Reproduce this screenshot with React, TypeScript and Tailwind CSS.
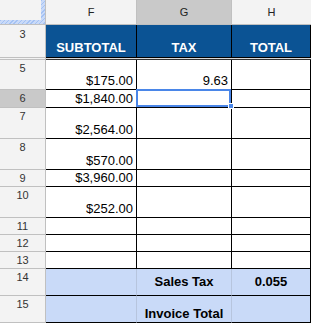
import React from 'react'

const cols = 'grid grid-cols-[46px_91px_95px_79px]'
const hatch = 'bg-[repeating-linear-gradient(135deg,#a4c2f4_0px,#a4c2f4_1px,#c9daf8_1px,#c9daf8_3px)]'

type RowDef = { n: string, h: string, f?: string, g?: string, sel?: boolean }

const rows: RowDef[] = [
  { n: '5', h: 'h-[30px]', f: '$175.00', g: '9.63' },
  { n: '6', h: 'h-[18px]', f: '$1,840.00', sel: true },
  { n: '7', h: 'h-[31px]', f: '$2,564.00' },
  { n: '8', h: 'h-[31px]', f: '$570.00' },
  { n: '9', h: 'h-[17px]', f: '$3,960.00' },
  { n: '10', h: 'h-[31px]', f: '$252.00' },
  { n: '11', h: 'h-[17px]' },
  { n: '12', h: 'h-[17px]' },
  { n: '13', h: 'h-[17px]' },
]

function RowHead({ n, sel = false }: { n: string, sel?: boolean }) {
  return (
    <div className={`border-r border-b border-[#c0c0c0] ${sel ? 'bg-[#c9c9c9]' : 'bg-[#f3f3f3]'} text-[11px] leading-[14px] text-[#333] text-center pt-[1px]`}>
      {n}
    </div>
  )
}

function DataCell({ v }: { v?: string }) {
  return (
    <div className="border-r border-b border-black flex items-end justify-end px-[3px] pb-[1px] text-[13px] leading-[15px] text-black">
      {v}
    </div>
  )
}

export default function App() {
  return (
    <div className="w-[311px] h-[323px] overflow-hidden bg-white font-['Liberation_Sans',Arial,sans-serif]">
      {/* column letters */}
      <div className={`${cols} h-[25px]`}>
        <div className="border-r border-b border-[#c0c0c0] bg-[#f3f3f3] flex flex-col">
          <div className="flex flex-1">
            <div className="flex-1" />
            <div className={`w-[4px] ${hatch}`} />
          </div>
          <div className={`h-[4px] ${hatch}`} />
        </div>
        <div className="border-r border-b border-[#c0c0c0] bg-[#f3f3f3] flex items-center justify-center text-[11px] text-[#222]">F</div>
        <div className="border-r border-b border-[#c0c0c0] bg-[#c9c9c9] flex items-center justify-center text-[11px] text-[#222]">G</div>
        <div className="border-b border-[#c0c0c0] bg-[#f3f3f3] flex items-center justify-center text-[11px] text-[#222]">H</div>
      </div>

      {/* row 3 header */}
      <div className={`${cols} h-[32px]`}>
        <div className="border-r border-[#c0c0c0] bg-[#f3f3f3] text-[11px] leading-[14px] text-[#333] text-center pt-[2px]">3</div>
        {['SUBTOTAL', 'TAX', 'TOTAL'].map(t => (
          <div key={t} className="border-r border-black bg-[#0b5394] flex items-end justify-center pb-[2px] text-[13px] leading-[15px] font-bold text-white">
            {t}
          </div>
        ))}
      </div>

      {/* frozen divider */}
      <div className={`${cols} h-[3px]`}>
        <div className="border-r border-[#c0c0c0] flex flex-col">
          <div className="h-px bg-[#c0c0c0]" />
          <div className="h-px bg-[#f3f3f3]" />
          <div className="h-px bg-[#c0c0c0]" />
        </div>
        <div className="col-span-3 flex flex-col">
          <div className="h-px bg-black" />
          <div className="h-px bg-[#d9d9d9]" />
          <div className="h-px bg-[#333]" />
        </div>
      </div>

      {rows.map(r => (
        <div key={r.n} className={`${cols} ${r.h}`}>
          <RowHead n={r.n} sel={r.sel} />
          <DataCell v={r.f} />
          {r.sel ? (
            <div className="relative border-r border-b border-black">
              <div className="absolute -left-px -top-px w-[95px] h-[18px] border-2 border-[#4a86e8] z-10" />
              <div className="absolute -right-[3px] -bottom-[2px] w-[6px] h-[6px] bg-[#4a86e8] border border-white z-20" />
            </div>
          ) : (
            <DataCell v={r.g} />
          )}
          <DataCell />
        </div>
      ))}

      {/* row 14 */}
      <div className={`${cols} h-[27px]`}>
        <RowHead n="14" />
        <div className="border-r border-b border-[#b7c5de] border-b-black bg-[#c9daf8]" />
        <div className="border-r border-b border-[#b7c5de] border-b-black bg-[#c9daf8] flex items-center justify-center text-[13px] font-bold text-black">Sales Tax</div>
        <div className="border-r border-b border-black bg-[#c9daf8] flex items-center justify-center text-[13px] font-bold text-black">0.055</div>
      </div>

      {/* row 15 */}
      <div className={`${cols} h-[27px]`}>
        <RowHead n="15" />
        <div className="border-r border-b border-[#b7c5de] border-b-black bg-[#c9daf8]" />
        <div className="border-r border-b border-[#b7c5de] border-b-black bg-[#c9daf8] flex items-end justify-center pb-[1px] text-[13px] leading-[15px] font-bold text-black">Invoice Total</div>
        <div className="border-r border-b border-black bg-[#c9daf8]" />
      </div>
    </div>
  )
}
